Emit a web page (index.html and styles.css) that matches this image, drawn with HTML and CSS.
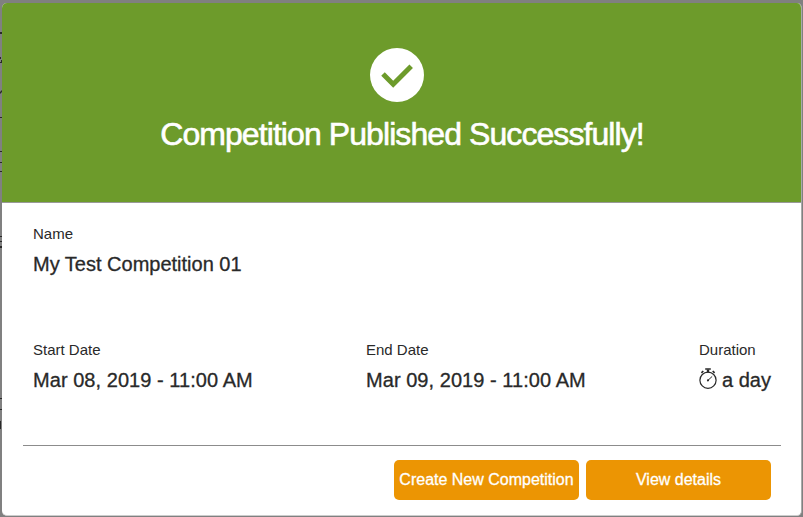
FILE: index.html
```html
<!DOCTYPE html>
<html lang="en">
<head>
<meta charset="utf-8">
<title>Competition Published</title>
<link rel="stylesheet" href="styles.css">
</head>
<body>
<svg class="page-behind" width="2" height="517" viewBox="0 0 2 517" aria-hidden="true">
  <path d="M0 32h2v2H0zM0 57h1v2H0zM1 60h1v3H0v-1h1zM0 92l2-2v2l-2 2zM0 117h2v1H0zM0 151h2v1H0zM0 162h2v1H0zM0 171h2v1H0zM0 236h2v1H0zM0 241h2v1H0zM0 246h2v2H0zM0 398h2v1H0zM0 409h2v1H0zM0 421h1v8H0z" fill="#292929"/>
</svg>
<main class="modal">
  <header class="banner">
    <svg class="check" viewBox="0 0 54 54" aria-hidden="true">
      <circle cx="27" cy="27" r="27" fill="#fff"/>
      <path d="M13 26 23.2 36.2 41.2 18.2" fill="none" stroke="#6d9b2b" stroke-width="5"/>
    </svg>
    <h1 class="title">Competition Published Successfully!</h1>
  </header>
  <section class="details">
    <div class="field name">
      <div class="label">Name</div>
      <div class="value">My Test Competition 01</div>
    </div>
    <div class="field">
      <div class="label">Start Date</div>
      <div class="value date">Mar 08, 2019 - 11:00 AM</div>
    </div>
    <div class="field">
      <div class="label">End Date</div>
      <div class="value date">Mar 09, 2019 - 11:00 AM</div>
    </div>
    <div class="field">
      <div class="label">Duration</div>
      <div class="value duration">
        <svg class="stopwatch" viewBox="0 0 18 21" fill="none" stroke="#292929" aria-hidden="true">
          <circle cx="9" cy="12.2" r="8.1" stroke-width="1.2"/>
          <path d="M9 1.5v3" stroke-width="2.4"/>
          <path d="M6.2 1h5.6" stroke-width="1.5"/>
          <path d="M2.4 4.8 4.3 3M13.7 3l1.9 1.8" stroke-width="1.7"/>
          <path d="M8.5 12.8 13.2 8.4" stroke-width="1"/>
          <circle cx="9" cy="12.3" r="1.1" fill="#292929" stroke="none"/>
        </svg>
        <span>a day</span>
      </div>
    </div>
  </section>
  <footer class="actions">
    <button class="button" type="button">Create New Competition</button>
    <button class="button" type="button">View details</button>
  </footer>
</main>
</body>
</html>
```

FILE: styles.css
```css
* { box-sizing: border-box; }

body {
  margin: 0;
  height: 517px;
  padding: 3px 1px 1px 2px;
  overflow: hidden;
  background: #808080;
  color: #292929;
  font-family: "Liberation Sans", Arial, sans-serif;
}

.page-behind {
  position: absolute;
  left: 0;
  top: 0;
}

.modal {
  height: 513px;
  overflow: hidden;
  display: flex;
  flex-direction: column;
  border-radius: 5px;
  background: #fff;
  border-right: 1px solid #aaa;
  border-bottom: 1px solid #ccc;
}

.banner {
  height: 200px;
  flex: none;
  padding-top: 45px;
  display: flex;
  flex-direction: column;
  align-items: center;
  background: #6d9b2b;
  border-bottom: 1px solid #999;
}

.check {
  width: 54px;
  height: 54px;
  flex: none;
  margin-right: 9px;
}

.title {
  margin: 13px 0 0 1px;
  font-size: 32px;
  line-height: 38px;
  font-weight: 400;
  letter-spacing: -0.92px;
  color: #fff;
  -webkit-text-stroke: 0.6px #fff;
  white-space: nowrap;
}

.details {
  height: 243px;
  margin: 0 20px 0 21px;
  padding: 22px 0 0 10px;
  display: grid;
  grid-template-columns: 333px 333px auto;
  grid-template-rows: 116px auto;
  border-bottom: 1px solid #8c8c8c;
}

.name { grid-column: 1 / -1; }

.label {
  font-size: 15px;
  line-height: 18px;
}

.value {
  margin-top: 9px;
  font-size: 20px;
  line-height: 24px;
  -webkit-text-stroke: 0.3px #292929;
  white-space: nowrap;
}

.date { letter-spacing: 0.05px; }

.duration {
  display: flex;
}

.stopwatch {
  width: 18px;
  height: 21px;
  margin-right: 5px;
}

.actions {
  padding: 14px 30px 0 0;
  display: flex;
  justify-content: flex-end;
  gap: 7px;
}

.button {
  width: 185px;
  height: 40px;
  padding: 0;
  border: 0;
  border-radius: 5px;
  background: #ec9503;
  color: #fff;
  font: 16px/20px "Liberation Sans", Arial, sans-serif;
  -webkit-text-stroke: 0.3px #fff;
  white-space: nowrap;
}
```
